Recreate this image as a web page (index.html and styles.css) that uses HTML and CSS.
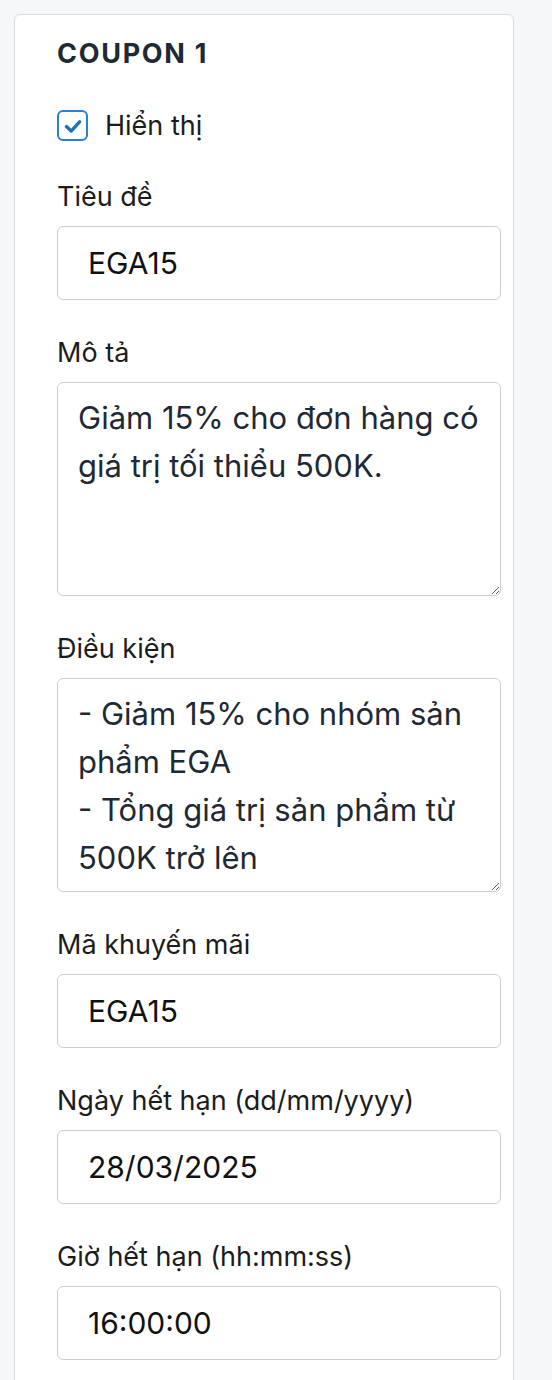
FILE: index.html
```html
<!DOCTYPE html>
<html lang="vi">
<head>
  <meta charset="UTF-8" />
  <meta name="viewport" content="width=device-width, initial-scale=1.0" />
  <title>Coupon settings</title>
  <link rel="stylesheet" href="styles.css">
</head>
<body>

  <!-- Coupon card -->
  <div class="card">
    <h2 class="card-title">COUPON 1</h2>

    <label class="check-row">
      <span class="checkbox">
        <svg viewBox="0 0 20 20" width="22" height="22">
          <polyline points="4,10.5 8.3,14.6 16,6.2" fill="none" stroke="#1b6fbf" stroke-width="3" stroke-linecap="round" stroke-linejoin="round" />
        </svg>
      </span>
      <span>Hiển thị</span>
    </label>

    <div class="field">
      <label class="field-label">Tiêu đề</label>
      <input class="text-input" type="text" value="EGA15" />
    </div>

    <div class="field">
      <label class="field-label">Mô tả</label>
      <textarea class="text-area">Giảm 15% cho đơn hàng có giá trị tối thiểu 500K.</textarea>
    </div>

    <div class="field">
      <label class="field-label">Điều kiện</label>
      <textarea class="text-area">- Giảm 15% cho nhóm sản phẩm EGA
- Tổng giá trị sản phẩm từ 500K trở lên</textarea>
    </div>

    <div class="field">
      <label class="field-label">Mã khuyến mãi</label>
      <input class="text-input" type="text" value="EGA15" />
    </div>

    <div class="field">
      <label class="field-label">Ngày hết hạn (dd/mm/yyyy)</label>
      <input class="text-input" type="text" value="28/03/2025" />
    </div>

    <div class="field">
      <label class="field-label">Giờ hết hạn (hh:mm:ss)</label>
      <input class="text-input" type="text" value="16:00:00" />
    </div>
  </div>

</body>
</html>
```

FILE: styles.css
```css
body {
  margin: 0;
  padding: 14px;
  background-color: #f5f7f9;
  font-family: Inter, "Noto Sans", sans-serif;
  color: #1c1c1c;
}

.card {
  width: 500px;
  box-sizing: border-box;
  background: #fff;
  border: 1px solid #d6dce2;
  border-radius: 6px;
  padding: 24px 12px 40px 42px;
}

.card-title {
  margin: 0;
  font-size: 27px;
  line-height: 30px;
  font-weight: 700;
  letter-spacing: 1.7px;
  color: #1f2933;
}

.check-row {
  display: flex;
  align-items: center;
  gap: 17px;
  margin: 41px 0 39px 0;
  font-size: 27px;
  line-height: 30px;
}

.checkbox {
  width: 31px;
  height: 31px;
  box-sizing: border-box;
  border: 2px solid #2b7fd4;
  border-radius: 6px;
  display: flex;
  align-items: center;
  justify-content: center;
}

.field {
  margin-bottom: 36px;
}

.field-label {
  display: block;
  font-size: 27px;
  line-height: 34px;
  margin-bottom: 12px;
}

.text-input,
.text-area {
  display: block;
  width: 100%;
  box-sizing: border-box;
  border: 1px solid #c8cfd5;
  border-radius: 6px;
  background: #fff;
  font-family: Inter, "Noto Sans", sans-serif;
  margin: 0;
}

.text-input {
  height: 74px;
  padding: 0 20px 0 30px;
  font-size: 30px;
  color: #111;
}

.text-area {
  height: 214px;
  padding: 11px 6px 8px 20px;
  font-size: 31px;
  line-height: 48px;
  color: #1f2933;
  overflow: hidden;
}
```
